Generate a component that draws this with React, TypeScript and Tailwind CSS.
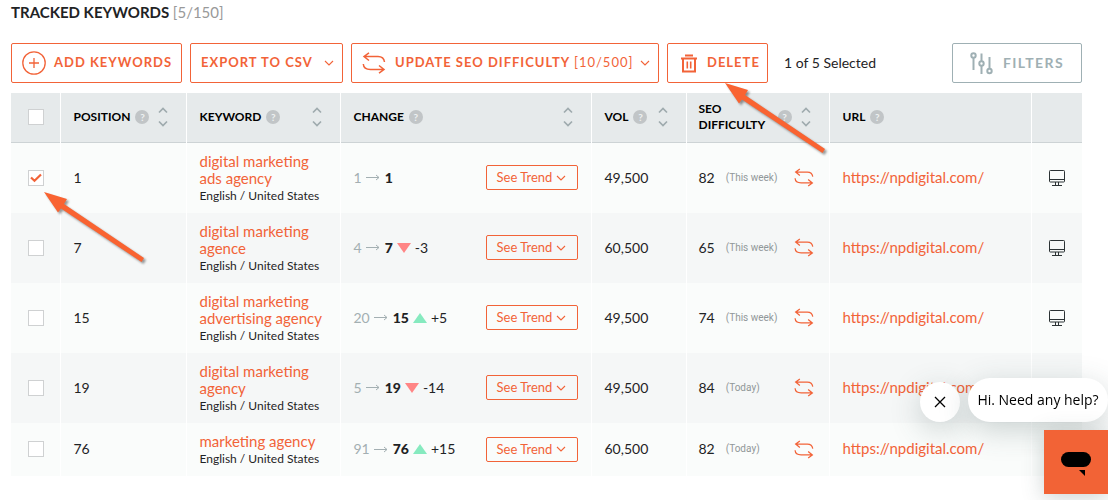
import { useState } from 'react';
import type { ReactNode } from 'react';

interface Keyword {
  id: number;
  keyword: string;
  locale: string;
  position: number;
  previous: number;
  volume: string;
  difficulty: number;
  updated: string;
  url: string;
}

const LIMIT = 150;

const keywords: Keyword[] = [
  { id: 1, keyword: 'digital marketing ads agency', locale: 'English / United States', position: 1, previous: 1, volume: '49,500', difficulty: 82, updated: 'This week', url: 'https://npdigital.com/' },
  { id: 2, keyword: 'digital marketing agence', locale: 'English / United States', position: 7, previous: 4, volume: '60,500', difficulty: 65, updated: 'This week', url: 'https://npdigital.com/' },
  { id: 3, keyword: 'digital marketing advertising agency', locale: 'English / United States', position: 15, previous: 20, volume: '49,500', difficulty: 74, updated: 'This week', url: 'https://npdigital.com/' },
  { id: 4, keyword: 'digital marketing agency', locale: 'English / United States', position: 19, previous: 5, volume: '49,500', difficulty: 84, updated: 'Today', url: 'https://npdigital.com/' },
  { id: 5, keyword: 'marketing agency', locale: 'English / United States', position: 76, previous: 91, volume: '60,500', difficulty: 82, updated: 'Today', url: 'https://npdigital.com/' },
];

const ChevronDown = () => (
  <svg width="10" height="6" viewBox="0 0 10 6" fill="none" stroke="currentColor" strokeWidth="1.1" className="shrink-0">
    <path d="M1 1l4 4 4-4" />
  </svg>
);

const SwapIcon = ({ className }: { className: string }) => (
  <svg viewBox="0 0 24 22" fill="none" stroke="currentColor" strokeWidth="1.5" className={className}>
    <path d="M7 0.800L2 4.500l5 4M2 4.500h14c4 0 6 1.500 6.500 5.500" />
    <path d="M17 13.500l5 4-5 3.700M22 17.500H8.500C4 17.500 1.500 15.500 1.300 12" />
  </svg>
);

const PlusCircle = () => (
  <svg width="24" height="24" viewBox="0 0 24 24" fill="none" stroke="currentColor" strokeWidth="1.3" className="shrink-0">
    <circle cx="12" cy="12" r="11.2" />
    <path d="M12 7v10M7 12h10" />
  </svg>
);

const TrashIcon = () => (
  <svg width="18" height="19" viewBox="0 0 18 19" fill="none" stroke="currentColor" strokeWidth="2" className="shrink-0">
    <path d="M5 1.500h8M1 4.500h16M3 4.500v13h12v-13" />
    <path d="M7.300 7.500v7M10.700 7.500v7" strokeWidth="1.6" />
  </svg>
);

const SlidersIcon = () => (
  <svg width="23" height="23" viewBox="0 0 23 23" fill="none" stroke="currentColor" strokeWidth="2" className="shrink-0">
    <circle cx="3.5" cy="3.5" r="2.2" />
    <path d="M3.500 6v12" />
    <circle cx="11.5" cy="11.5" r="2.2" />
    <path d="M11.500 1.500V9M11.500 14v8" />
    <circle cx="19.5" cy="19" r="2.2" />
    <path d="M19.500 5v12" />
  </svg>
);

const MonitorIcon = () => (
  <svg width="16" height="16" viewBox="0 0 16 16" fill="none" stroke="#2b3234" className="mx-auto">
    <rect x="0.5" y="0.5" width="15" height="11.5" rx="0.8" />
    <path d="M0.500 9.500h15M6.500 12v3M9.500 12v3M3 15.500h10" />
  </svg>
);

const HelpIcon = () => (
  <span className="flex size-[14px] shrink-0 items-center justify-center rounded-full bg-[#c1c5c7] text-[10px] leading-none font-bold text-[#eef1f1]">
    ?
  </span>
);

const SortButton = ({ name }: { name: string }) => (
  <button type="button" aria-label={`Sort by ${name}`} className="ml-auto text-[#9fabae]">
    <svg width="10" height="20" viewBox="0 0 10 20" fill="none" stroke="currentColor" strokeWidth="1.7">
      <path d="M1 5.500l4-4 4 4M1 14.500l4 4 4-4" />
    </svg>
  </button>
);

const Pointer = ({ className }: { className: string }) => (
  <svg width="106" height="74" viewBox="0 0 106 74" aria-hidden="true" className={`pointer-events-none absolute z-10 max-w-none ${className}`}>
    <g className="drop-shadow-[2px_2px_1px_rgba(0,0,0,0.4)]">
      <path d="M0 0l23 7-3 5 80 54-2.500 4L17 16.500l-3 4z" fill="#f96331" />
    </g>
  </svg>
);

interface TickBoxProps {
  label: string;
  checked: boolean;
  onChange: () => void;
  children?: ReactNode;
}

const TickBox = ({ label, checked, onChange, children }: TickBoxProps) => (
  <label className="relative mx-auto block size-4">
    <input
      type="checkbox"
      aria-label={label}
      checked={checked}
      onChange={onChange}
      className="block size-4 appearance-none border border-[#cfd1d2] bg-white"
    />
    {checked && (
      <svg viewBox="0 0 16 16" fill="none" stroke="#f26338" strokeWidth="2.2" className="pointer-events-none absolute inset-0">
        <path d="M3 7.500l3.500 3.300 6.500-6.300" />
      </svg>
    )}
    {children}
  </label>
);

const HeaderCell = ({ name, wrap, sortable = true }: { name: string; wrap?: boolean; sortable?: boolean }) => (
  <th scope="col" className={`border-l border-white pr-[18px] text-left ${wrap ? 'pl-3' : 'pl-[13px]'}`}>
    <div className="flex items-center gap-[5px]">
      <span className={wrap ? 'w-[74px]' : ''}>{name}</span>
      <HelpIcon />
      {sortable && <SortButton name={name} />}
    </div>
  </th>
);

const Change = ({ previous, position }: { previous: number; position: number }) => {
  const diff = previous - position;

  return (
    <span className="flex items-center">
      <span className="text-[#a3afb2]">{previous}</span>
      <svg width="14" height="7" viewBox="0 0 14 7" fill="none" stroke="#a3afb2" className="mx-1">
        <path d="M0 3.500h13M10 1l3 2.500L10 6" />
      </svg>
      <span className="ml-px font-black">{position}</span>
      {diff !== 0 && (
        <>
          <svg width="14" height="10" viewBox="0 0 14 10" className="mx-1">
            {diff > 0 ? <path d="M7 0l7 10H0z" fill="#86eabf" /> : <path d="M0 0h14L7 10z" fill="#ff8585" />}
          </svg>
          <span>{diff > 0 ? `+${diff}` : diff}</span>
        </>
      )}
    </span>
  );
};

const buttonBase = 'flex h-10 shrink-0 items-center rounded-[2px] border font-bold whitespace-nowrap';
const orangeButton = 'border-[#f26338] text-[13px] tracking-[1px] text-[#f26338]';

const ChatWidget = () => {
  const [open, setOpen] = useState(true);

  return (
    <div className="fixed right-0 bottom-[6px] z-20 flex flex-col items-end gap-2">
      {open && (
        <div className="flex items-end gap-2">
          <button
            type="button"
            aria-label="Close message"
            onClick={() => setOpen(false)}
            className="flex size-10 items-center justify-center rounded-full bg-white shadow-[0_8px_30px_rgba(60,85,85,0.25)]"
          >
            <svg width="12" height="12" viewBox="0 0 12 12" fill="none" stroke="#000" strokeWidth="1.3">
              <path d="M1 1l10 10M11 1L1 11" />
            </svg>
          </button>
          <p className="flex h-11 w-[140px] items-center justify-center rounded-full bg-white font-['Open_Sans',sans-serif] text-sm whitespace-nowrap text-black shadow-[0_8px_30px_rgba(60,85,85,0.25)]">
            Hi. Need any help?
          </p>
        </div>
      )}
      <button
        type="button"
        aria-label="Open chat"
        onClick={() => setOpen(true)}
        className="flex size-16 items-center justify-center bg-[#f26336] shadow-[0_4px_20px_rgba(60,85,85,0.25)]"
      >
        <svg width="30" height="24" viewBox="0 0 30 24" className="mt-1">
          <rect width="30" height="15" rx="7.5" />
          <path d="M18 18h6v6z" />
        </svg>
      </button>
    </div>
  );
};

export default function App() {
  const [selected, setSelected] = useState<number[]>([1]);

  const toggle = (id: number) => {
    setSelected(prev => (prev.includes(id) ? prev.filter(item => item !== id) : [...prev, id]));
  };

  const allSelected = selected.length === keywords.length;

  return (
    <div className="bg-white pr-[26px] pb-6 pl-[11px] font-['Lato',sans-serif] text-[#1f2325]">
      <h1 className="text-[15px] leading-[25px] font-bold">
        TRACKED KEYWORDS <span className="font-normal text-[#999]">[{keywords.length}/{LIMIT}]</span>
      </h1>

      <div className="mt-[18px] flex items-center gap-2">
        <button type="button" className={`${buttonBase} ${orangeButton} w-[171px] gap-2 pl-[10px]`}>
          <PlusCircle />
          ADD KEYWORDS
        </button>
        <button type="button" className={`${buttonBase} ${orangeButton} w-[153px] justify-between pr-2 pl-[10px]`}>
          EXPORT TO CSV
          <ChevronDown />
        </button>
        <button type="button" className={`${buttonBase} ${orangeButton} w-[308px] pr-2 pl-[10px]`}>
          <SwapIcon className="mr-[9px] h-[22px] w-6" />
          <span>
            UPDATE SEO DIFFICULTY <span className="font-normal">[10/500]</span>
          </span>
          <span className="ml-auto">
            <ChevronDown />
          </span>
        </button>
        <div className="relative shrink-0">
          <button type="button" className={`${buttonBase} ${orangeButton} w-[101px] gap-[9px] pl-3`}>
            <TrashIcon />
            DELETE
          </button>
          <Pointer className="top-full left-[58px]" />
        </div>
        <p className="ml-2 text-sm">
          {selected.length} of {keywords.length} Selected
        </p>
        <button type="button" className={`${buttonBase} ml-auto w-[130px] justify-center gap-[10px] border-[#9fb0b4] text-sm tracking-widest text-[#9fb0b4]`}>
          <SlidersIcon />
          FILTERS
        </button>
      </div>

      <table className="mt-[10px] w-full min-w-[1000px] table-fixed text-sm">
        <colgroup>
          <col className="w-[49px]" />
          <col className="w-[126px]" />
          <col className="w-[154px]" />
          <col className="w-[251px]" />
          <col className="w-[95px]" />
          <col className="w-[143px]" />
          <col />
          <col className="w-[51px]" />
        </colgroup>
        <thead>
          <tr className="h-[49px] border-b border-[#cdd3d5] bg-[#e6eaeb] text-xs leading-4 font-bold text-black">
            <th scope="col" className="pl-[2px]">
              <TickBox
                label="Select all keywords"
                checked={allSelected}
                onChange={() => setSelected(allSelected ? [] : keywords.map(row => row.id))}
              />
            </th>
            <HeaderCell name="POSITION" />
            <HeaderCell name="KEYWORD" />
            <HeaderCell name="CHANGE" />
            <HeaderCell name="VOL" />
            <HeaderCell name="SEO DIFFICULTY" wrap />
            <HeaderCell name="URL" sortable={false} />
            <th scope="col" aria-label="Device" className="border-l border-white" />
          </tr>
        </thead>
        <tbody>
          {keywords.map(row => (
            <tr key={row.id} className="bg-[#fafcfb] even:bg-[#f5f7f7]">
              <td className="pl-[2px]">
                <TickBox label={`Select ${row.keyword}`} checked={selected.includes(row.id)} onChange={() => toggle(row.id)}>
                  {row.id === 1 && <Pointer className="top-[22px] left-full" />}
                </TickBox>
              </td>
              <td className="border-l border-white pl-[13px]">{row.position}</td>
              <td className="border-l border-white pt-[10px] pr-4 pb-2 pl-[13px]">
                <a href="#keyword" className="block text-[15px] leading-[17px] text-[#f26338]">{row.keyword}</a>
                <span className="block text-xs leading-[18px] whitespace-nowrap">{row.locale}</span>
              </td>
              <td className="border-l border-white px-[13px]">
                <div className="flex items-center justify-between">
                  <Change previous={row.previous} position={row.position} />
                  <button type="button" className="flex h-[25px] w-[92px] items-center justify-center gap-1 rounded-[2px] border border-[#f26338] text-[13px] text-[#f26338]">
                    See Trend
                    <ChevronDown />
                  </button>
                </div>
              </td>
              <td className="border-l border-white pl-[13px]">{row.volume}</td>
              <td className="border-l border-white pr-[15px] pl-3">
                <div className="flex items-center">
                  <span>{row.difficulty}</span>
                  <span className="ml-[11px] font-['Roboto',sans-serif] text-[10px] leading-4 text-[#919799]">({row.updated})</span>
                  <button type="button" aria-label="Update SEO difficulty" className="ml-auto text-[#f26338]">
                    <SwapIcon className="h-[19px] w-5" />
                  </button>
                </div>
              </td>
              <td className="border-l border-white pl-[13px]">
                <a href={row.url} className="text-[15px] text-[#f26338]">{row.url}</a>
              </td>
              <td className="border-l border-white">
                <MonitorIcon />
              </td>
            </tr>
          ))}
        </tbody>
      </table>

      <ChatWidget />
    </div>
  );
}
